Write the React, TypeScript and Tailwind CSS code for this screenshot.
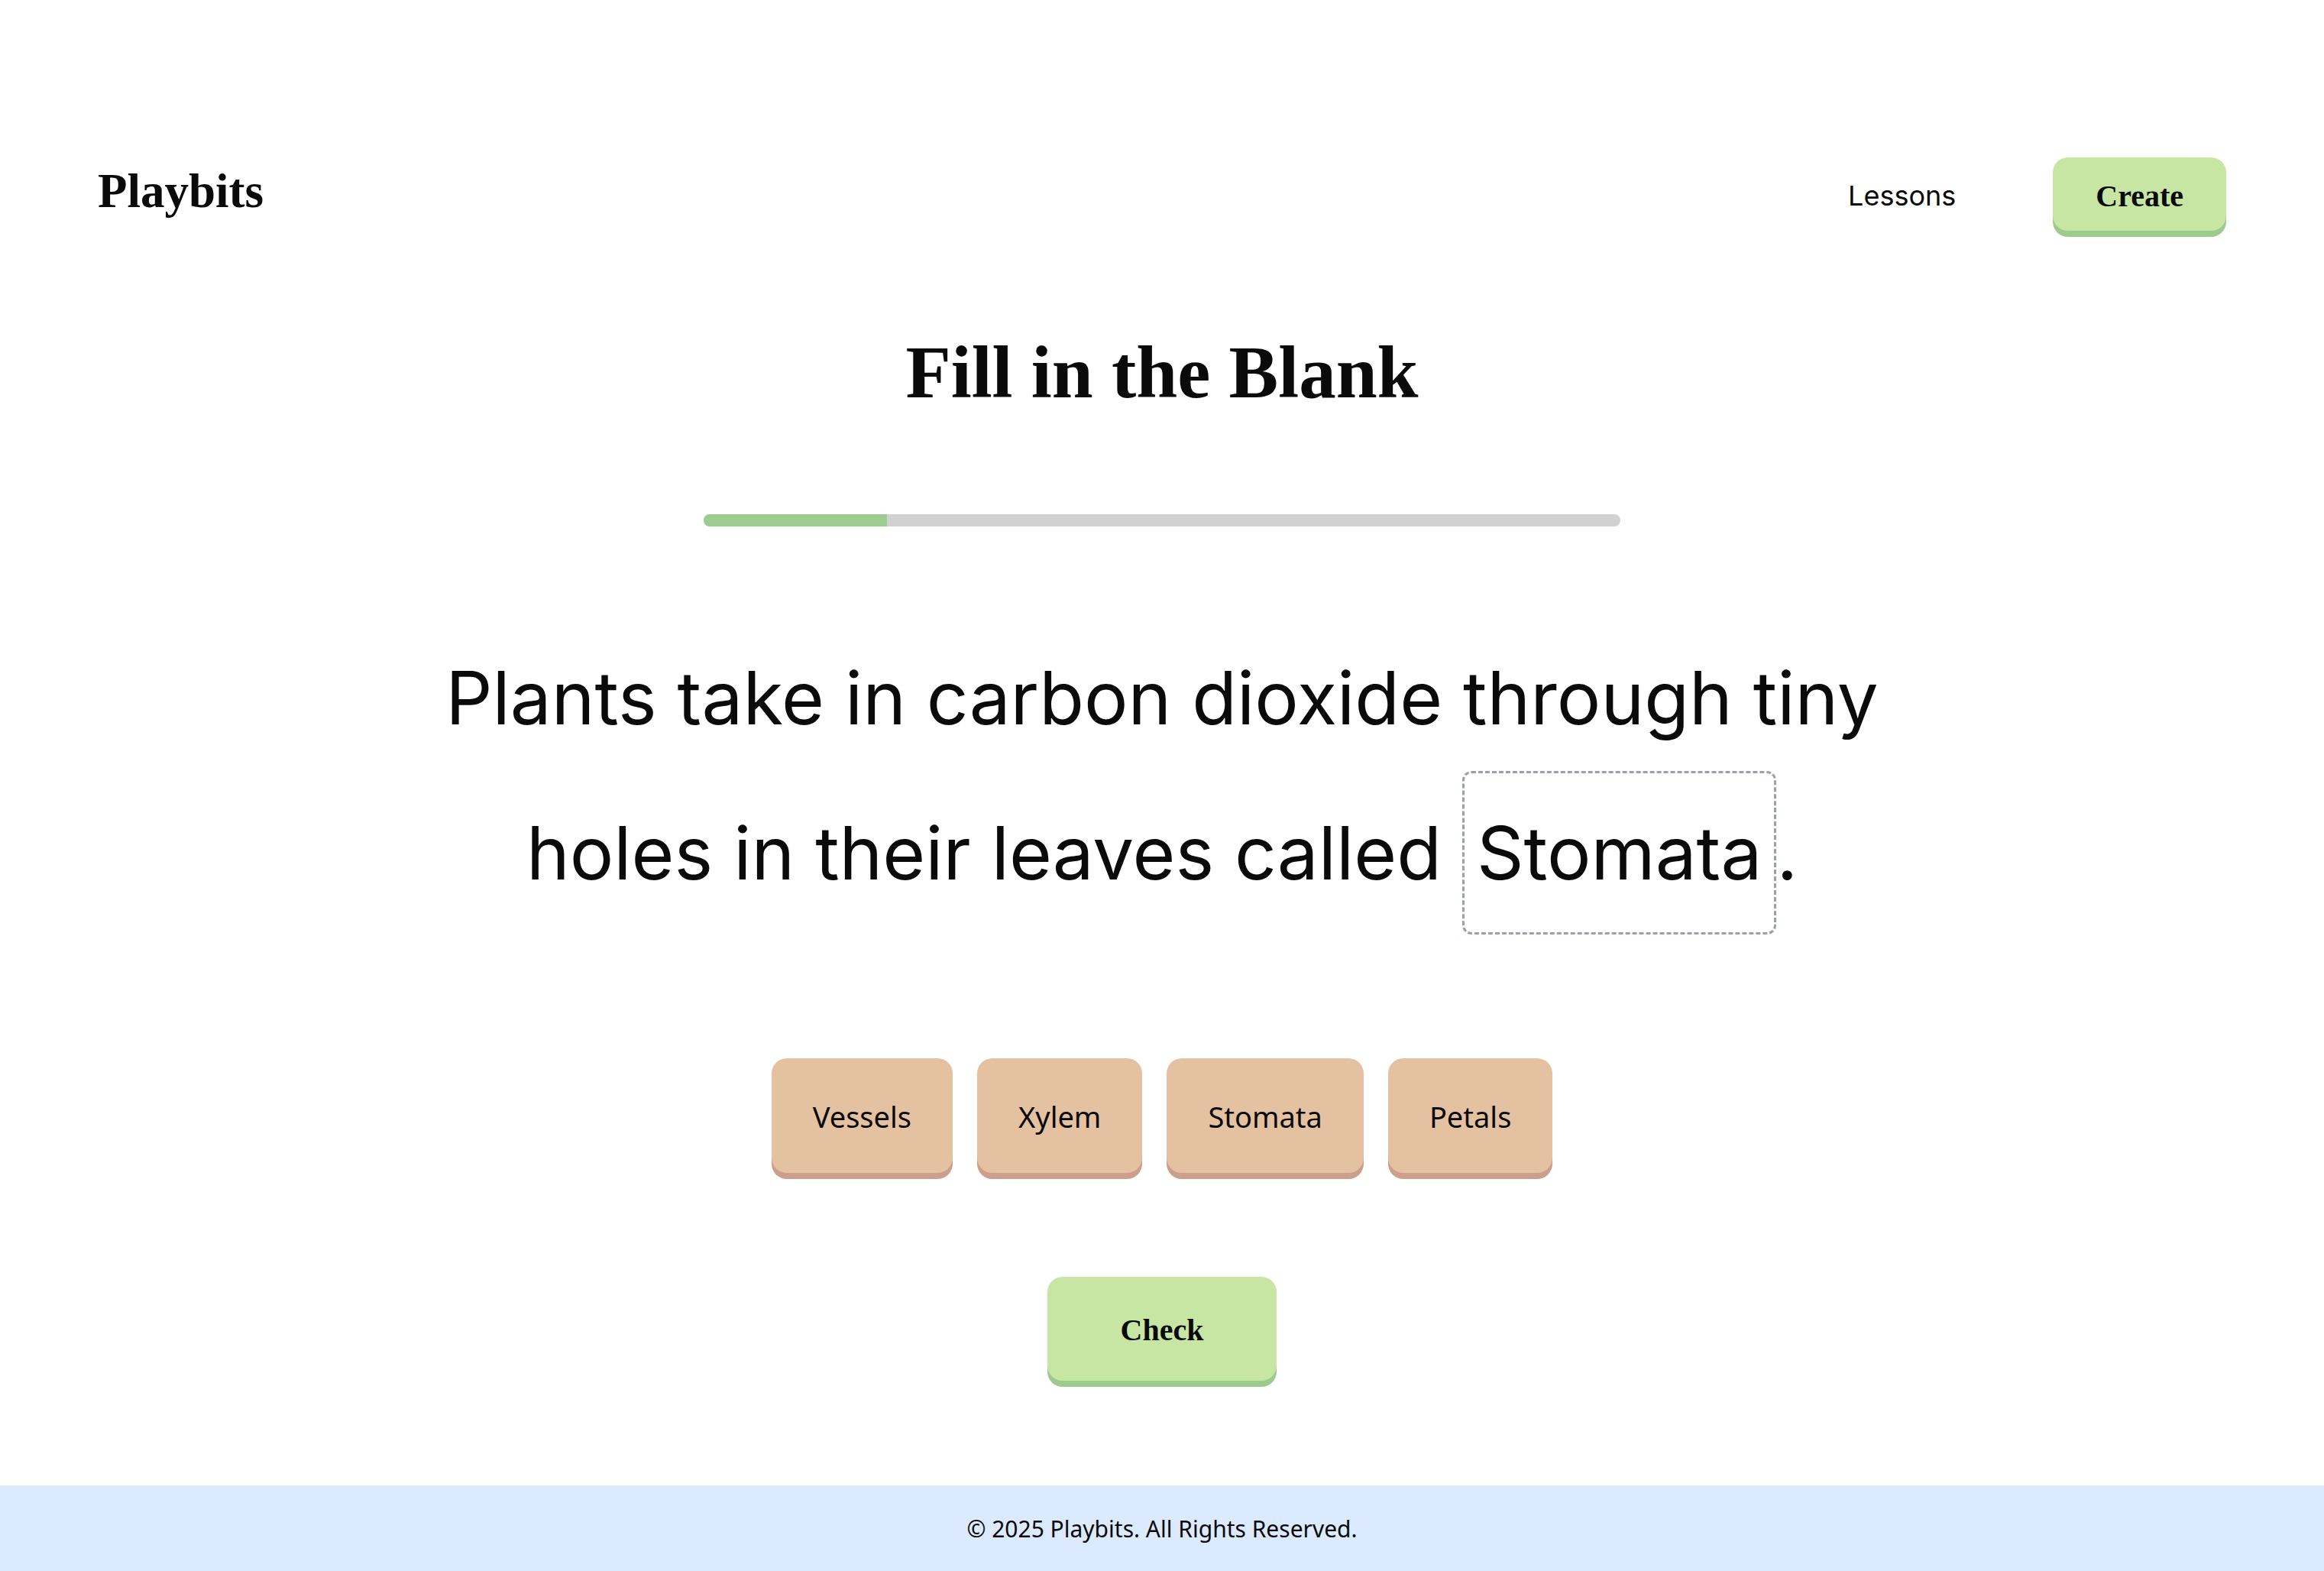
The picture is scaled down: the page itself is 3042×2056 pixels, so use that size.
import React from "react"

const words = ["Vessels", "Xylem", "Stomata", "Petals"]

export default function App() {
  return (
    <div className="min-h-screen flex flex-col bg-white text-[#0a0a0a]">
      {/* Header */}
      <header className="flex items-center justify-between px-[128px] pt-[206px]">
        <span className="font-['Liberation_Serif',serif] font-bold text-[63px] leading-none pb-2">
          Playbits
        </span>
        <nav className="flex items-center gap-[127px]">
          <a className="font-['Inter',sans-serif] text-[36px] leading-none pt-1">Lessons</a>
          <button className="bg-[#c7e6a3] rounded-[20px] px-[56px] pt-[23px] pb-[17px] shadow-[0_8px_0_#9ccb8d] font-['Liberation_Serif',serif] font-bold text-[40px] leading-[56px]">
            Create
          </button>
        </nav>
      </header>

      <main className="flex-1 flex flex-col items-center">
        <h1 className="mt-[137px] font-['Liberation_Serif',serif] font-bold text-[97px] leading-none">
          Fill in the Blank
        </h1>

        {/* Progress */}
        <div className="mt-[137px] w-[1200px] h-4 rounded-full bg-[#d1d1d1] overflow-hidden">
          <div className="w-[20%] h-full bg-[#9ccc8e]" />
        </div>

        {/* Sentence */}
        <p className="mt-[128px] max-w-[2048px] text-center font-['Inter',sans-serif] text-[96px] leading-[192px]">
          Plants take in carbon dioxide through tiny holes in their leaves called{" "}
          <span className="inline-block border-[3px] border-dashed border-[#9ca0ae] rounded-[12px] px-4 py-2">
            Stomata
          </span>
          .
        </p>

        {/* Word choices */}
        <div className="mt-[162px] flex gap-[32px]">
          {words.map((w) => (
            <button
              key={w}
              className="bg-[#e4c1a1] rounded-[20px] px-[54px] pt-[48px] pb-[46px] shadow-[0_8px_0_#cc9e8b] font-['Noto_Sans',sans-serif] text-[38px] leading-[56px]"
            >
              {w}
            </button>
          ))}
        </div>

        <button className="mt-[136px] bg-[#c7e6a3] rounded-[20px] px-[96px] pt-[42px] pb-[38px] shadow-[0_8px_0_#9ccb8d] font-['Liberation_Serif',serif] font-bold text-[40px] leading-[56px]">
          Check
        </button>
      </main>

      <footer className="h-[112px] bg-[#dbeafe] flex items-center justify-center font-['Noto_Sans',sans-serif] text-[30px]">
        © 2025 Playbits. All Rights Reserved.
      </footer>
    </div>
  )
}
